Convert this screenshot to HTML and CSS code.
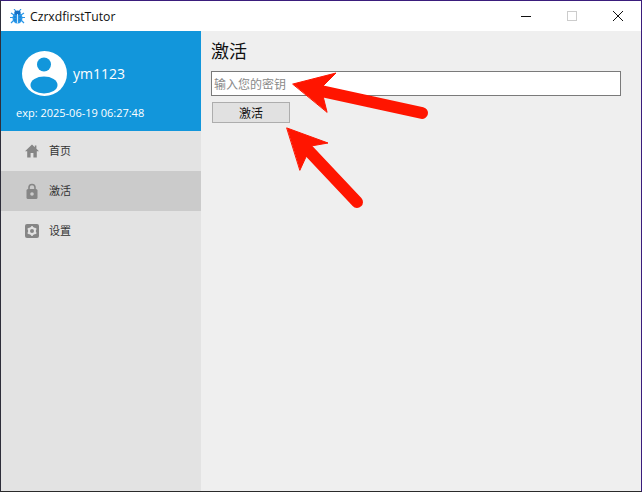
FILE: index.html
```html
<!DOCTYPE html>
<html lang="zh">
<head>
<meta charset="utf-8">
<title>CzrxdfirstTutor</title>
<link rel="stylesheet" href="styles.css">
</head>
<body>
<div class="window">
  <header class="titlebar">
    <svg class="app-icon" width="15" height="15" viewBox="0 0 15 15">
      <g stroke="#2a97e8" stroke-width="1.2" fill="none">
        <path d="M1 4l3 2M14 4l-3 2M0 8.5h3M15 8.5h-3M1 14l3-3M14 14l-3-3M4 0l2 2.5M11 0L9 2.5"/>
      </g>
      <ellipse cx="7.5" cy="9" rx="5" ry="5.5" fill="#2a97e8"/>
      <ellipse cx="7.5" cy="3.8" rx="3.2" ry="2.2" fill="#1670c4"/>
      <path d="M7.5 5v9.5" stroke="#cfe8fa" stroke-width="1"/>
      <path d="M4.5 8h1M9.5 8h1M4.5 11h1M9.5 11h1" stroke="#0f5fa8" stroke-width="1.2"/>
    </svg>
    <span class="app-title">CzrxdfirstTutor</span>
    <div class="win-controls">
      <span class="win-btn"><svg width="12" height="12" viewBox="0 0 12 12"><path d="M1 6.5h10" stroke="#111" stroke-width="1"/></svg></span>
      <span class="win-btn"><svg width="12" height="12" viewBox="0 0 12 12"><rect x="1.5" y="1.5" width="9" height="9" fill="none" stroke="#ccc"/></svg></span>
      <span class="win-btn"><svg width="12" height="12" viewBox="0 0 12 12"><path d="M1 1l10 10M11 1L1 11" stroke="#111" stroke-width="1"/></svg></span>
    </div>
  </header>
  <div class="main">
    <aside class="sidebar">
      <section class="profile">
        <div class="user">
          <svg class="avatar" width="45" height="45" viewBox="0 0 45 45">
            <circle cx="22.5" cy="22.5" r="22.5" fill="#fff"/>
            <circle cx="22" cy="13.5" r="7" fill="#1296db"/>
            <ellipse cx="22" cy="34" rx="13.5" ry="8.5" fill="#1296db"/>
          </svg>
          <span class="username">ym1123</span>
        </div>
        <div class="expiry">exp: 2025-06-19 06:27:48</div>
      </section>
      <nav class="nav">
        <a class="nav-item">
          <svg class="nav-icon" width="14" height="14" viewBox="0 0 14 14"><path d="M7 .5L0 7.2H2.2V13.5H5.6V9H8.4V13.5H11.8V7.2H14L11.4 4.7V1.5H9.8V3.2Z" fill="#868686"/></svg>
          <span>首页</span>
        </a>
        <a class="nav-item">
          <svg class="nav-icon" width="14" height="16" viewBox="0 0 14 16"><path d="M4 7V4.5a3 3 0 0 1 6 0V7" fill="none" stroke="#868686" stroke-width="1.6"/><rect x="1.5" y="6" width="11" height="10" rx="1.5" fill="#868686"/><circle cx="7" cy="11" r="1.8" fill="#ccc"/></svg>
          <span>激活</span>
        </a>
        <a class="nav-item">
          <svg class="nav-icon" width="14" height="14" viewBox="0 0 14 14"><rect width="14" height="14" rx="2" fill="#868686"/><circle cx="7" cy="7" r="3" fill="none" stroke="#e3e3e3" stroke-width="2"/><path d="M7 2v2M7 10v2M2.7 4.5l1.7 1M9.6 8.5l1.7 1M2.7 9.5l1.7-1M9.6 5.5l1.7-1" stroke="#e3e3e3" stroke-width="1.6"/></svg>
          <span>设置</span>
        </a>
      </nav>
    </aside>
    <main class="content">
      <h1 class="heading">激活</h1>
      <input class="key-input" type="text" placeholder="输入您的密钥">
      <button class="activate-btn" type="button">激活</button>
    </main>
  </div>
  <svg class="annotations" width="642" height="492" viewBox="0 0 642 492">
    <g fill="#ff1500" stroke="#ff1500" stroke-linecap="round" stroke-linejoin="round">
      <path d="M321 91L422 113" stroke-width="12" fill="none"/>
      <path d="M293 84L336 73L321 88L327 112Z" stroke-width="1"/>
      <path d="M308 150L357 202" stroke-width="12" fill="none"/>
      <path d="M287 128L328 143L311 146L300 170Z" stroke-width="1"/>
    </g>
  </svg>
</div>
</body>
</html>
```
FILE: styles.css
```css
* { box-sizing: border-box; }
html, body { margin: 0; padding: 0; }
body { width: 642px; height: 492px; overflow: hidden; background: #2a2a2a; }
.window {
  position: relative;
  width: 642px;
  height: 492px;
  display: flex;
  flex-direction: column;
  border-top: 1px solid #3a1d7c;
  border-left: 1px solid #2e2e3a;
  border-right: 1px solid #3a1d7c;
  border-bottom: 1px solid #2a2a2a;
  font-family: "Open Sans", "Noto Sans CJK SC", sans-serif;
}
.titlebar {
  height: 30px;
  flex: none;
  display: flex;
  align-items: center;
  background: #fff;
  padding-left: 9px;
}
.app-icon { flex: none; }
.app-title {
  margin-left: 5px;
  font-size: 12.2px;
  color: #111;
}
.win-controls { margin-left: auto; display: flex; }
.win-btn {
  width: 46px;
  height: 30px;
  display: flex;
  align-items: center;
  justify-content: center;
}
.main { flex: 1; display: flex; min-height: 0; }
.sidebar {
  width: 200px;
  flex: none;
  background: #e3e3e3;
  display: flex;
  flex-direction: column;
}
.profile {
  height: 100px;
  background: #1296db;
  color: #fff;
  padding: 20px 0 0 15px;
}
.user { display: flex; align-items: center; margin-left: 6px; }
.username { margin-left: 6px; font-size: 14px; line-height: 20px; }
.expiry { margin-top: 9px; font-size: 11px; line-height: 16px; }
.nav { display: flex; flex-direction: column; }
.nav-item {
  height: 40px;
  display: flex;
  align-items: center;
  padding-left: 24px;
  padding-bottom: 2px;
  font-size: 11px;
  color: #333;
  font-family: "Noto Sans CJK SC", sans-serif;
}
.nav-item:nth-child(2) { background: #cbcbcb; }
.nav-icon { width: 14px; flex: none; margin: 2px 10px 0 0; }
.content {
  flex: 1;
  background: #efefef;
  padding: 7px 10px;
  display: flex;
  flex-direction: column;
  align-items: flex-start;
}
.heading {
  margin: 0;
  font-size: 18px;
  line-height: 24px;
  font-weight: 400;
  color: #111;
  font-family: "Noto Sans CJK SC", sans-serif;
}
.key-input {
  margin-top: 9px;
  width: 410px;
  height: 25px;
  border: 1px solid #7a7a7a;
  border-radius: 0;
  background: #fff;
  padding: 0 2px;
  font-size: 12px;
  font-family: "Noto Sans CJK SC", sans-serif;
  outline: none;
}
.key-input::placeholder { color: #8a8a8a; opacity: 1; }
.activate-btn {
  margin: 6px 0 0 1px;
  width: 78px;
  height: 21px;
  padding: 0;
  border: 1px solid #adadad;
  border-radius: 0;
  background: #e1e1e1;
  color: #111;
  font-size: 12px;
  font-family: "Noto Sans CJK SC", sans-serif;
}
.annotations {
  position: absolute;
  top: -1px;
  left: -1px;
  pointer-events: none;
}
```
